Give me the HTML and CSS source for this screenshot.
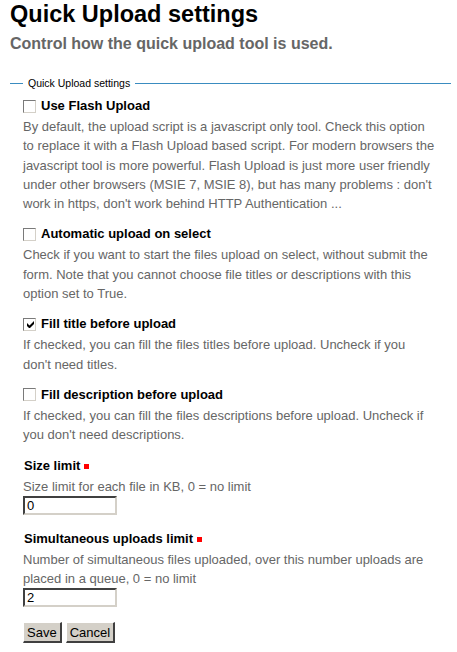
FILE: index.html
```html
<!DOCTYPE html>
<html>
<head>
<meta charset="utf-8">
<link rel="stylesheet" href="styles.css">
</head>
<body>
<h1 class="title">Quick Upload settings</h1>
<p class="subtitle">Control how the quick upload tool is used.</p>
<form class="form">
<fieldset class="fs">
<legend class="legend">Quick Upload settings</legend>

<div class="field">
  <div class="label"><span class="cb"></span>Use Flash Upload</div>
  <div class="help">By default, the upload script is a javascript only tool. Check this option to replace it with a Flash Upload based script. For modern browsers the javascript tool is more powerful. Flash Upload is just more user friendly under other browsers (MSIE 7, MSIE 8), but has many problems : don't work in https, don't work behind HTTP Authentication ...</div>
</div>

<div class="field">
  <div class="label"><span class="cb"></span>Automatic upload on select</div>
  <div class="help">Check if you want to start the files upload on select, without submit the form. Note that you cannot choose file titles or descriptions with this option set to True.</div>
</div>

<div class="field">
  <div class="label"><span class="cb"><svg class="check" viewBox="0 0 7 7" width="7" height="7"><path d="M0 2v3l2 2h1l4-4V0L2.5 4.5z" fill="#000"/></svg></span>Fill title before upload</div>
  <div class="help">If checked, you can fill the files titles before upload. Uncheck if you don't need titles.</div>
</div>

<div class="field">
  <div class="label"><span class="cb"></span>Fill description before upload</div>
  <div class="help">If checked, you can fill the files descriptions before upload. Uncheck if you don't need descriptions.</div>
</div>

<div class="field field-input">
  <div class="label label-plain">Size limit<span class="req"></span></div>
  <div class="help">Size limit for each file in KB, 0 = no limit</div>
  <input class="text" type="text" value="0">
</div>

<div class="field field-input">
  <div class="label label-plain">Simultaneous uploads limit<span class="req"></span></div>
  <div class="help">Number of simultaneous files uploaded, over this number uploads are placed in a queue, 0 = no limit</div>
  <input class="text" type="text" value="2">
</div>

<div class="buttons">
  <button class="btn" type="button">Save</button>
  <button class="btn" type="button">Cancel</button>
</div>
</fieldset>
</form>
</body>
</html>
```
FILE: styles.css
```css
html, body {
  margin: 0;
  padding: 0;
  background: #fff;
}
body {
  padding: 1px 6px 0 10px;
  font-family: "Liberation Sans", Arial, sans-serif;
  color: #000;
}
.title {
  margin: 0;
  font-size: 23.5px;
  line-height: 26px;
  font-weight: bold;
}
.subtitle {
  margin: 7px 0 0;
  font-size: 16px;
  line-height: 20px;
  font-weight: bold;
  color: #666;
}
.form {
  margin: 0;
}
.fs {
  margin: 23px 0 0;
  padding: 6px 16px 0 13px;
  border: none;
  border-top: 1px solid #3a8cc0;
  min-width: 0;
}
.legend {
  padding: 0 5px;
  font-size: 10.5px;
  line-height: 13px;
}
.field {
  margin-bottom: 11px;
}
.field-input {
  margin-bottom: 14px;
}
.label {
  display: flex;
  align-items: center;
  height: 20px;
  font-size: 13px;
  font-weight: bold;
  line-height: 20px;
}
.label-plain {
  padding-left: 1px;
}
.cb {
  box-sizing: border-box;
  width: 13px;
  height: 13px;
  margin: 0 5px 0 0;
  border-style: solid;
  border-width: 1px;
  border-color: #7a7a7a #d4d0c8 #d4d0c8 #7a7a7a;
  background: #fff;
  display: flex;
  align-items: center;
  justify-content: center;
  padding: 1px 0 0 1px;
}
.check {
  display: block;
}
.req {
  display: inline-block;
  width: 5px;
  height: 5px;
  background: #f00;
  margin-left: 4px;
  margin-top: 1px;
}
.help {
  margin-top: 1px;
  font-size: 13px;
  line-height: 19.3px;
  color: #666;
}
.text {
  display: block;
  box-sizing: border-box;
  width: 94px;
  height: 19px;
  margin: 0;
  padding: 0 2px;
  border-style: solid;
  border-width: 2px;
  border-color: #404040 #d4d0c8 #d4d0c8 #404040;
  box-shadow: inset -1px -1px 0 #fff;
  font-family: "Liberation Sans", Arial, sans-serif;
  font-size: 13px;
  color: #000;
  background: #fff;
  outline: none;
}
.buttons {
  display: flex;
  gap: 4px;
  padding-top: 1px;
}
.btn {
  box-sizing: border-box;
  height: 21px;
  margin: 0;
  padding: 0 3px;
  border-style: solid;
  border-width: 1px 2px 2px 1px;
  border-color: #fff #404040 #404040 #fff;
  background: #d4d0c8;
  font-family: "Liberation Sans", Arial, sans-serif;
  font-size: 13px;
  line-height: 17px;
  color: #000;
}
```
